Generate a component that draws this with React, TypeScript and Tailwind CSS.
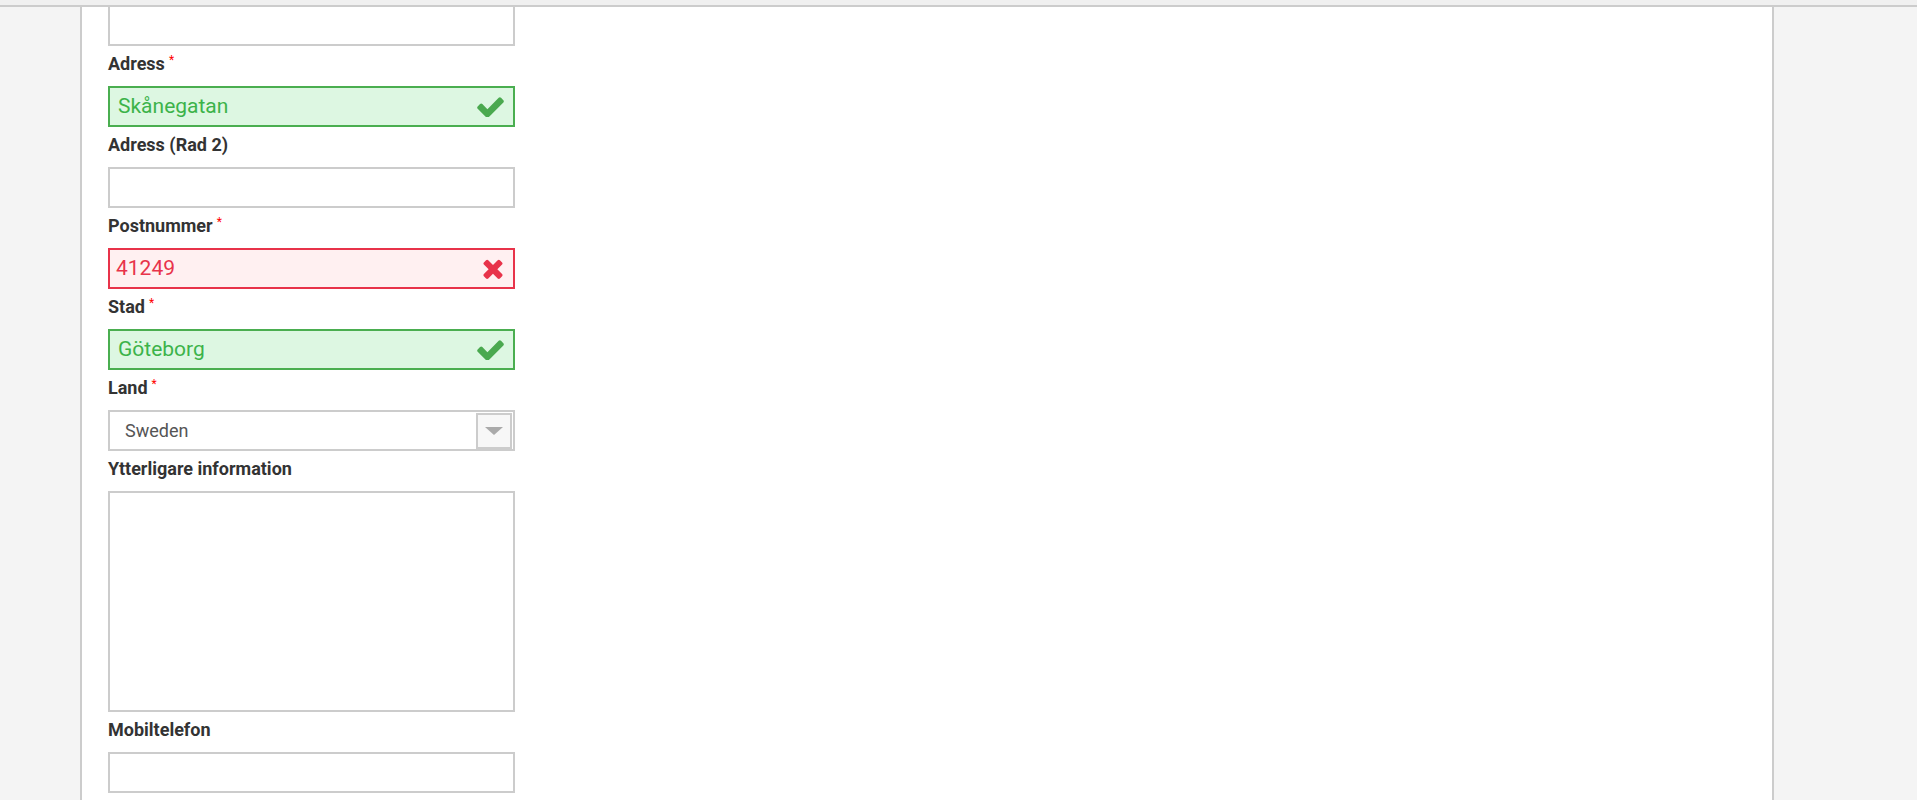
import React from "react";

const font = { fontFamily: "Roboto, 'Noto Sans', Arial, sans-serif" };

function CheckIcon() {
  return (
    <svg viewBox="110 330 1570 1130" className="w-[27px] h-[20px]" fill="#4aa94f">
      <path d="M1671 566q0 40-28 68l-724 724-136 136q-28 28-68 28t-68-28l-136-136-362-362q-28-28-28-68t28-68l136-136q28-28 68-28t68 28l294 295 656-657q28-28 68-28t68 28l136 136q28 28 28 68z" />
    </svg>
  );
}

function TimesIcon() {
  return (
    <svg viewBox="105 255 1200 1305" className="w-[22px] h-[21px]" fill="#e8334a">
      <path d="M1298 1322q0 40-28 68l-136 136q-28 28-68 28t-68-28l-294-294-294 294q-28 28-68 28t-68-28l-136-136q-28-28-28-68t28-68l294-294-294-294q-28-28-28-68t28-68l136-136q28-28 68-28t68 28l294 294 294-294q28-28 68-28t68 28l136 136q28 28 28 68t-28 68l-294 294 294 294q28 28 28 68z" />
    </svg>
  );
}

function Label({ text, required }: { text: string; required?: boolean }) {
  return (
    <div className="h-[26px] mb-[10px] pt-[2px] flex items-center text-[18px] font-bold text-[#333] leading-none">
      <span>{text}</span>
      {required && (
        <span className="text-[#f00] text-[12px] font-normal ml-[4px] self-start mt-[2px]">*</span>
      )}
    </div>
  );
}

function EmptyInput({ className = "" }: { className?: string }) {
  return <div className={`h-[41px] w-[407px] border-2 border-[#ccc] bg-white mb-[4px] ${className}`} />;
}

function ValidInput({ value }: { value: string }) {
  return (
    <div className="h-[41px] w-[407px] border-2 border-[#4aae50] bg-[#ddf7e2] mb-[4px] flex items-center justify-between pl-[8px] pr-[9px]">
      <span className="text-[21px] text-[#3cb34a]">{value}</span>
      <CheckIcon />
    </div>
  );
}

function InvalidInput({ value }: { value: string }) {
  return (
    <div className="h-[41px] w-[407px] border-2 border-[#e8334a] bg-[#fff0f1] mb-[4px] flex items-center justify-between pl-[6px] pr-[9px]">
      <span className="text-[21px] text-[#e8334a]">{value}</span>
      <TimesIcon />
    </div>
  );
}

function SelectBox({ value }: { value: string }) {
  return (
    <div className="h-[41px] w-[407px] border-2 border-[#ccc] bg-white mb-[4px] flex items-center justify-between pl-[15px] pr-[1px]">
      <span className="text-[18px] text-[#555]">{value}</span>
      <div className="w-[36px] h-[36px] border-2 border-[#ccc] bg-[#f7f7f7] flex items-center justify-center">
        <div className="w-0 h-0 border-l-[9px] border-r-[9px] border-t-[8px] border-l-transparent border-r-transparent border-t-[#aaa]" />
      </div>
    </div>
  );
}

export default function App() {
  return (
    <div className="w-[1917px] h-[800px] bg-[#f4f4f4] flex flex-col overflow-hidden" style={font}>
      <div className="h-[5px] bg-[#f0f0f0]" />
      <div className="h-[2px] bg-[#ccc]" />
      <div className="flex flex-1 min-h-0">
        <div className="w-[80px] bg-[#f4f4f4]" />
        <div className="w-[2px] bg-[#ccc]" />
        <div className="flex-1 bg-white overflow-hidden pl-[26px]">
          <EmptyInput className="-mt-[2px]" />
          <Label text="Adress" required />
          <ValidInput value="Skånegatan" />
          <Label text="Adress (Rad 2)" />
          <EmptyInput />
          <Label text="Postnummer" required />
          <InvalidInput value="41249" />
          <Label text="Stad" required />
          <ValidInput value="Göteborg" />
          <Label text="Land" required />
          <SelectBox value="Sweden" />
          <Label text="Ytterligare information" />
          <div className="h-[221px] w-[407px] border-2 border-[#ccc] bg-white mb-[4px]" />
          <Label text="Mobiltelefon" />
          <EmptyInput />
        </div>
        <div className="w-[2px] bg-[#ccc]" />
        <div className="w-[143px] bg-[#f4f4f4]" />
      </div>
    </div>
  );
}
